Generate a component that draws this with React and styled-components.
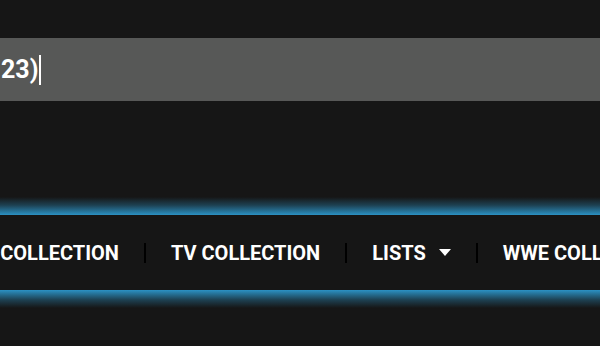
import React from "react";
import styled, { createGlobalStyle } from "styled-components";

const Global = createGlobalStyle`
  html, body { margin: 0; padding: 0; background: #161616; overflow: hidden; }
  body { font-family: Roboto, "Liberation Sans", Arial, sans-serif; }
`;

const Page = styled.div`
  width: 600px;
  height: 346px;
  background: #161616;
  overflow: hidden;
  display: flex;
  flex-direction: column;
`;

const SearchBar = styled.div`
  margin-top: 38px;
  height: 63px;
  background: #575857;
  display: flex;
  align-items: center;
  overflow: hidden;
`;

const Query = styled.span`
  color: #ffffff;
  font-weight: 700;
  font-size: 25px;
  line-height: 30px;
  padding-left: 1px;
  white-space: nowrap;
`;

const Caret = styled.span`
  display: inline-block;
  width: 1.5px;
  height: 30px;
  margin-left: 1px;
  background: #ffffff;
`;

const NavWrap = styled.div`
  margin-top: 96px;
  display: flex;
  flex-direction: column;
`;

const Glow = styled.div`
  height: 18px;
  background: linear-gradient(
    ${(p) => (p.$flip ? "to top" : "to bottom")},
    rgba(43, 143, 192, 0) 0%,
    rgba(43, 143, 192, 0.35) 45%,
    #2b91c3 100%
  );
`;

const Nav = styled.nav`
  height: 75px;
  background: #161616;
  display: flex;
  align-items: center;
  overflow: hidden;
`;

const Items = styled.ul`
  list-style: none;
  margin: 0 0 0 -91px;
  padding: 0;
  display: flex;
  align-items: center;
  white-space: nowrap;
`;

const Item = styled.li`
  display: flex;
  align-items: center;
  gap: 13px;
  padding: 0 25px;
  color: #ffffff;
  font-weight: 700;
  font-size: 20px;
  line-height: 20px;
  & + & {
    border-left: 2px solid #000000;
  }
`;

const ItemBox = styled.div`
  display: flex;
  align-items: center;
  height: 20px;
`;

const Caretdown = styled.svg`
  width: 12px;
  height: 7px;
  display: block;
`;

export default function App() {
  return (
    <>
      <Global />
      <Page>
        <SearchBar>
          <Query>23)</Query>
          <Caret />
        </SearchBar>
        <NavWrap>
          <Glow />
          <Nav>
            <Items>
              <Item>
                <ItemBox>MOVIE COLLECTION</ItemBox>
              </Item>
              <Item>
                <ItemBox>TV COLLECTION</ItemBox>
              </Item>
              <Item>
                <ItemBox>LISTS</ItemBox>
                <Caretdown viewBox="0 0 12 7">
                  <path d="M0 0 H12 L6 7 Z" fill="#ffffff" />
                </Caretdown>
              </Item>
              <Item>
                <ItemBox>WWE COLLECTION</ItemBox>
              </Item>
            </Items>
          </Nav>
          <Glow $flip />
        </NavWrap>
      </Page>
    </>
  );
}
